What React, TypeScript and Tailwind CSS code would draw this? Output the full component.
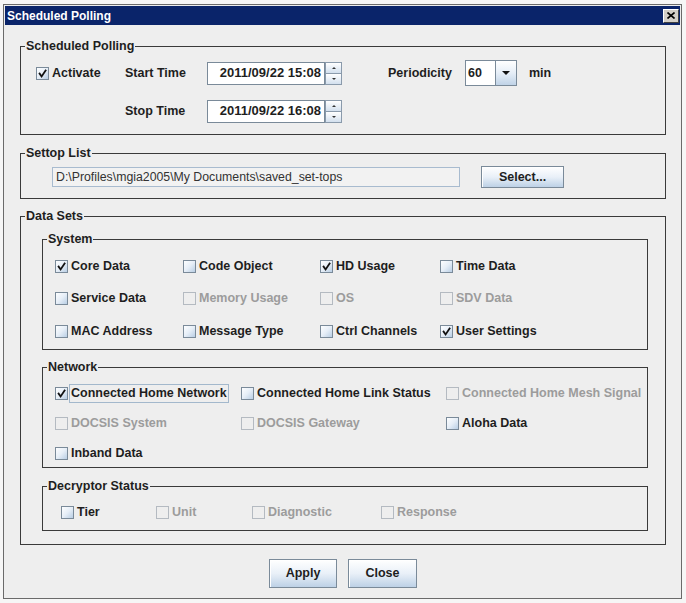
import React from 'react';

type CheckProps = { label: string; checked?: boolean; disabled?: boolean; focus?: boolean };

function Check({ label, checked = false, disabled = false, focus = false }: CheckProps) {
  return (
    <div className="flex items-center h-[20px] whitespace-nowrap">
      <span
        className={
          disabled
            ? 'relative shrink-0 w-[13px] h-[13px] border border-[#b4bac1] bg-[#eeeeee]'
            : 'relative shrink-0 w-[13px] h-[13px] border border-[#7a8a99] bg-linear-to-br from-[#fdfeff] via-[#e6eef7] to-[#b9cee4]'
        }
      >
        {checked && (
          <svg className="absolute left-0 top-0" width="11" height="11" viewBox="0 0 11 11">
            <path d="M2.6 5.6 L4.6 8.4 L8.6 2.6" stroke="#111" strokeWidth="1.8" fill="none" strokeLinecap="square" />
          </svg>
        )}
      </span>
      <span
        className={
          (focus ? 'border-[#a3b8cc] ' : 'border-transparent ') +
          (disabled ? 'text-[#9c9c9c] ' : 'text-[#1e1e1e] ') +
          'ml-[1px] px-[1px] border leading-[17px] font-bold text-[12.5px]'
        }
      >
        {label}
      </span>
    </div>
  );
}

function Group({ title, className, children }: { title: string; className?: string; children: React.ReactNode }) {
  return (
    <fieldset className={'border border-[#3a3a3a] p-0 m-0 min-w-0 ' + (className ?? '')}>
      <legend className="ml-[4px] px-[1px] font-bold text-[12.5px] leading-[14px] text-[#1e1e1e]">{title}</legend>
      {children}
    </fieldset>
  );
}

function Spinner() {
  return (
    <div className="flex flex-col w-[17px] h-[23px]">
      <div className="flex-1 border border-[#8a9aab] bg-linear-to-b from-[#ffffff] to-[#d3e0ee] flex items-center justify-center">
        <span className="w-0 h-0 border-l-[2px] border-r-[2px] border-b-[2px] border-l-transparent border-r-transparent border-b-[#333]" />
      </div>
      <div className="flex-1 border border-t-0 border-[#8a9aab] bg-linear-to-b from-[#ffffff] to-[#d3e0ee] flex items-center justify-center">
        <span className="w-0 h-0 border-l-[2px] border-r-[2px] border-t-[2px] border-l-transparent border-r-transparent border-t-[#333]" />
      </div>
    </div>
  );
}

function DateField({ value }: { value: string }) {
  return (
    <div className="flex items-center">
      <div className="w-[118px] h-[23px] border border-[#7a8a99] bg-white flex items-center justify-end pr-[3px] font-bold text-[13px] text-[#1e1e1e]">
        {value}
      </div>
      <Spinner />
    </div>
  );
}

function Button({ label, className }: { label: string; className: string }) {
  return (
    <div
      className={
        'border border-[#7a8a99] bg-linear-to-b from-[#ffffff] via-[#e9f0f8] to-[#bdd1e6] shadow-[inset_1px_1px_0_#ffffff] flex items-center justify-center font-bold text-[12.5px] text-[#1e1e1e] ' +
        className
      }
    >
      {label}
    </div>
  );
}

export default function App() {
  return (
    <div className="w-[686px] h-[603px] bg-[#f6f6f6] pt-[4px] pl-[3px] font-['Liberation_Sans',Arial,sans-serif] overflow-hidden">
      <div className="w-[679px] h-[595px] border border-[#6a6a6a] bg-[#eeeeee] p-[1px] flex flex-col">
        {/* title bar */}
        <div className="h-[19px] bg-[#0a246a] flex items-center justify-between pl-[2px] pr-[1px]">
          <span className="text-white font-bold text-[12px] leading-[14px]">Scheduled Polling</span>
          <div className="w-[16px] h-[14px] bg-[#d4d0c8] border border-t-[#ffffff] border-l-[#ffffff] border-r-[#404040] border-b-[#404040] flex items-center justify-center">
            <svg width="8" height="7" viewBox="0 0 8 7">
              <path d="M0.5 0.5 L7.5 6.5 M7.5 0.5 L0.5 6.5" stroke="#000" strokeWidth="1.6" />
            </svg>
          </div>
        </div>

        {/* body */}
        <div className="flex flex-col pl-[15px] pr-[14px]">
          {/* Scheduled Polling */}
          <Group title="Scheduled Polling" className="mt-[14px]">
            <div className="pl-[15px] pt-[7px] pb-[10px]">
              <div className="flex items-center h-[26px]">
                <div className="w-[89px]">
                  <Check label="Activate" checked />
                </div>
                <div className="w-[82px] font-bold text-[12.5px] text-[#1e1e1e]">Start Time</div>
                <DateField value="2011/09/22 15:08" />
                <div className="ml-[46px] w-[77px] font-bold text-[12.5px] text-[#1e1e1e]">Periodicity</div>
                <div className="w-[52px] h-[26px] border border-[#7a8a99] bg-white flex">
                  <div className="flex-1 flex items-center pl-[2px] font-bold text-[12.5px] text-[#1e1e1e]">60</div>
                  <div className="w-[21px] border-l border-[#7a8a99] bg-linear-to-b from-[#ffffff] via-[#e6eef7] to-[#c0d3e7] flex items-center justify-center">
                    <span className="w-0 h-0 border-l-[4px] border-r-[4px] border-t-[4px] border-l-transparent border-r-transparent border-t-[#111]" />
                  </div>
                </div>
                <div className="ml-[12px] font-bold text-[12.5px] text-[#1e1e1e]">min</div>
              </div>
              <div className="flex items-center h-[26px] mt-[12px]">
                <div className="w-[89px]" />
                <div className="w-[82px] font-bold text-[12.5px] text-[#1e1e1e]">Stop Time</div>
                <DateField value="2011/09/22 16:08" />
              </div>
            </div>
          </Group>

          {/* Settop List */}
          <Group title="Settop List" className="mt-[11px]">
            <div className="pl-[31px] pt-[6px] pb-[10px] flex items-center">
              <div className="w-[408px] h-[20px] border border-[#a8bbcf] bg-[#f2f2f2] flex items-center pl-[3px] text-[12.3px] text-[#333] whitespace-nowrap">
                D:\Profiles\mgia2005\My Documents\saved_set-tops
              </div>
              <Button label="Select..." className="ml-[21px] w-[83px] h-[22px]" />
            </div>
          </Group>

          {/* Data Sets */}
          <Group title="Data Sets" className="mt-[10px]">
            <div className="pl-[21px] pr-[17px] pt-[9px] pb-[13px] flex flex-col">
              <Group title="System">
                <div className="pl-[12px] pt-[10px] pb-[8px] grid grid-cols-[128px_137px_120px_1fr] gap-y-[12.5px]">
                  <Check label="Core Data" checked />
                  <Check label="Code Object" />
                  <Check label="HD Usage" checked />
                  <Check label="Time Data" />
                  <Check label="Service Data" />
                  <Check label="Memory Usage" disabled />
                  <Check label="OS" disabled />
                  <Check label="SDV Data" disabled />
                  <Check label="MAC Address" />
                  <Check label="Message Type" />
                  <Check label="Ctrl Channels" />
                  <Check label="User Settings" checked />
                </div>
              </Group>

              <Group title="Network" className="mt-[10px]">
                <div className="pl-[12px] pt-[9px] pb-[4px] grid grid-cols-[186px_205px_1fr] gap-y-[10px]">
                  <Check label="Connected Home Network" checked focus />
                  <Check label="Connected Home Link Status" />
                  <Check label="Connected Home Mesh Signal" disabled />
                  <Check label="DOCSIS System" disabled />
                  <Check label="DOCSIS Gateway" disabled />
                  <Check label="Aloha Data" />
                  <Check label="Inband Data" />
                </div>
              </Group>

              <Group title="Decryptor Status" className="mt-[11px]">
                <div className="pl-[18px] pt-[9px] pb-[8px] grid grid-cols-[95px_96px_129px_1fr]">
                  <Check label="Tier" />
                  <Check label="Unit" disabled />
                  <Check label="Diagnostic" disabled />
                  <Check label="Response" disabled />
                </div>
              </Group>
            </div>
          </Group>

          {/* Buttons */}
          <div className="mt-[14px] flex justify-center gap-[11px]">
            <Button label="Apply" className="w-[68px] h-[29px]" />
            <Button label="Close" className="w-[69px] h-[29px]" />
          </div>
        </div>
      </div>
    </div>
  );
}
